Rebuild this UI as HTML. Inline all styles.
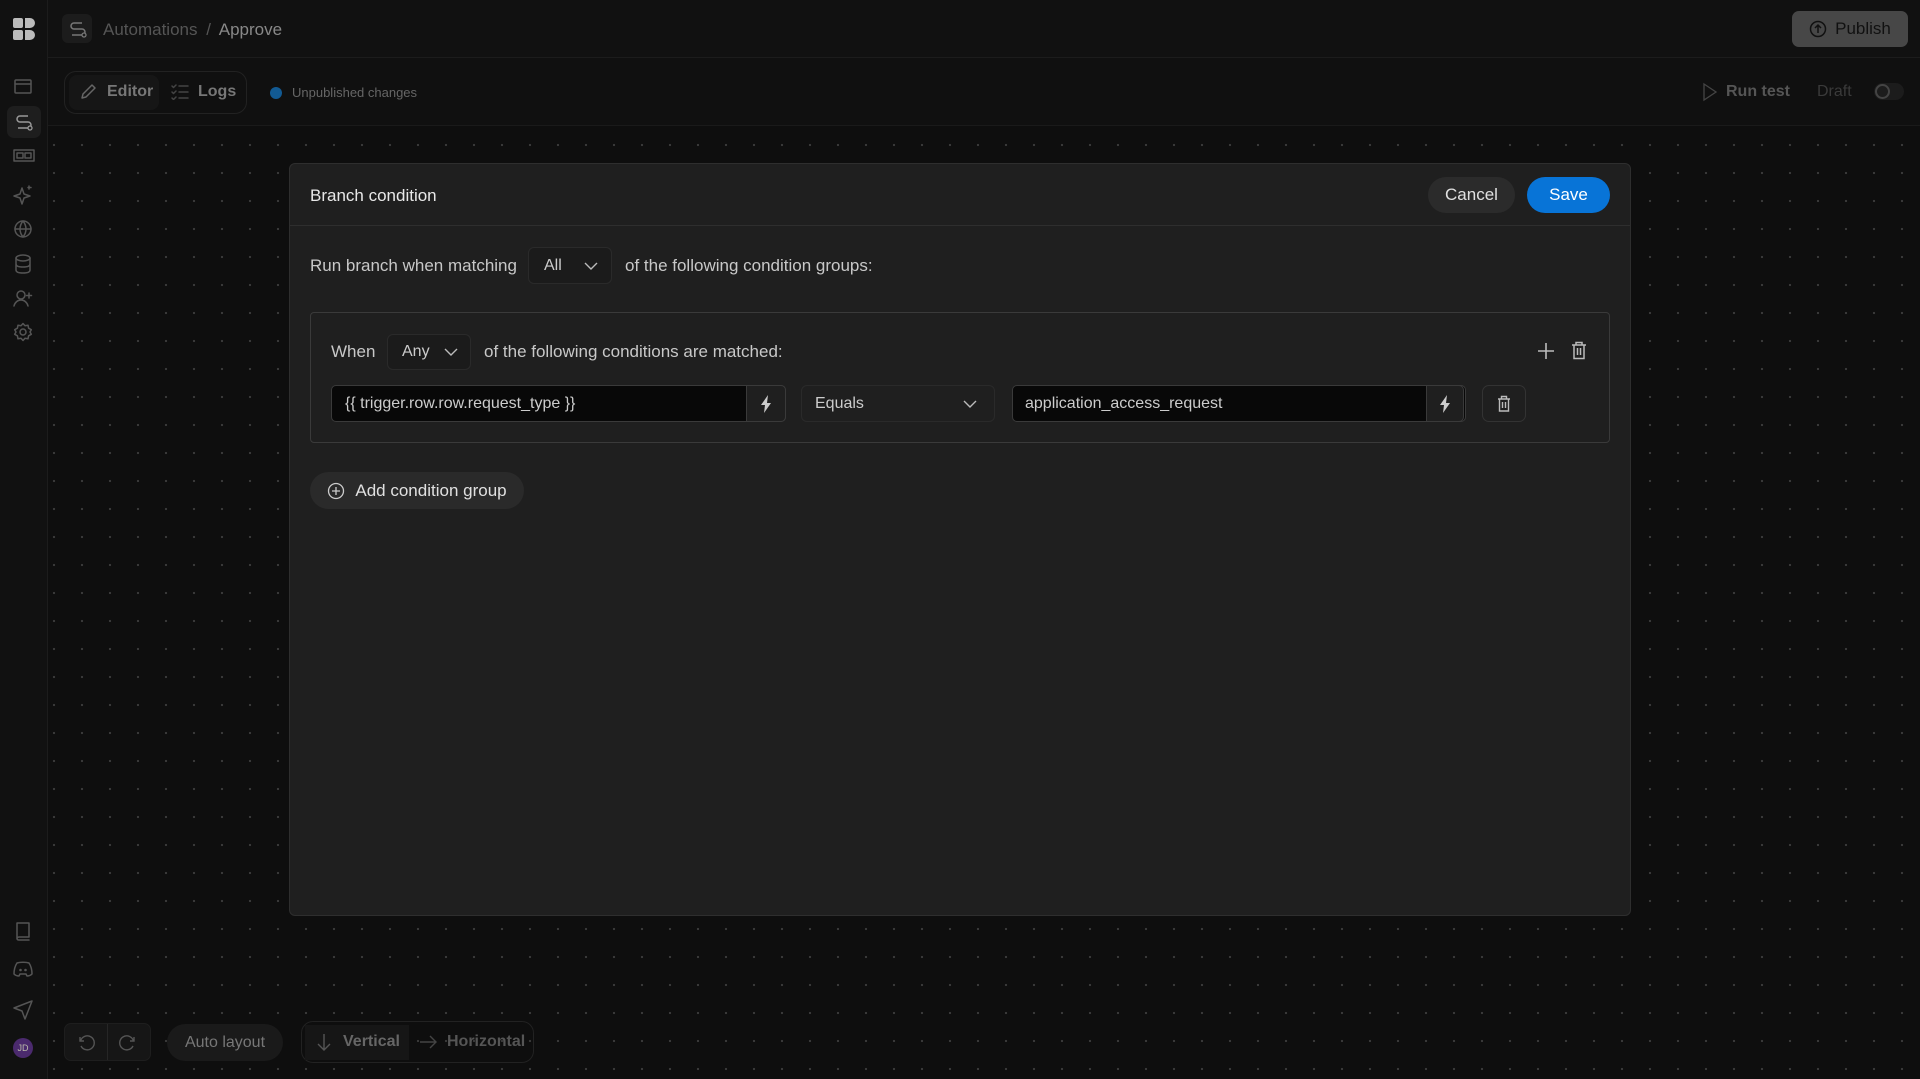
<!DOCTYPE html>
<html><head><meta charset="utf-8"><style>
*{box-sizing:border-box;margin:0;padding:0}
body{width:1920px;height:1079px;overflow:hidden;background:#0f0f0f;font-family:"Liberation Sans",sans-serif;color:#ddd;position:relative}
.abs{position:absolute}
.canvas{left:48px;top:126px;right:0;bottom:0;background-color:#0e0e0e;background-image:radial-gradient(circle,#3a3a3a 1px,transparent 1.3px);background-size:28px 28px;background-position:-8px 5px}
.side{left:0;top:0;width:48px;height:1079px;background:#111;border-right:1px solid #1c1c1c}
.top{left:48px;top:0;right:0;height:58px;background:#111;border-bottom:1px solid #1c1c1c}
.bar2{left:48px;top:58px;right:0;height:68px;background:#101010;border-bottom:1px solid #1a1a1a}
svg{display:block}
.ic{stroke:#555;fill:none;stroke-width:1.5;stroke-linecap:round;stroke-linejoin:round}
.modal{left:289px;top:163px;width:1342px;height:753px;background:#1f1f1f;border:1px solid #2e2e2e;border-radius:6px}
.btn{border-radius:20px;font-size:17px;display:flex;align-items:center;justify-content:center}
.sel{border:1px solid #2a2a2a;background:#1b1b1b;border-radius:6px;font-size:16px;color:#ccc;display:flex;align-items:center}
.inp{background:#080808;border:1px solid #3a3a3a;border-radius:5px;font-size:16px;color:#ccc;display:flex;align-items:center}
.t17{font-size:17px;color:#c8c8c8}
</style></head><body>
<div class="abs canvas"></div>
<div class="abs side"></div>
<div class="abs top"></div>
<div class="abs bar2"></div>

<svg class="abs" style="left:13px;top:18px" width="22" height="22" viewBox="0 0 22 22"><rect x="0" y="0" width="10" height="10" rx="2" fill="#bbb"/><path d="M12 0h5a5 5 0 0 1 0 10h-5z" fill="#bbb"/><rect x="0" y="12" width="10" height="10" rx="2" fill="#bbb"/><path d="M12 12h5a5 5 0 0 1 0 10h-5z" fill="#bbb"/></svg>
<svg class="abs" style="left:13px;top:78px" width="20" height="18"><rect class="ic" x="2" y="2" width="16" height="13" rx="1"/><path class="ic" d="M2 6h16"/></svg>
<div class="abs" style="left:7px;top:106px;width:34px;height:32px;background:#1e1e1e;border-radius:7px"></div>
<svg class="abs" style="left:14px;top:112px" width="20" height="20"><path d="M14 4H6a3 3 0 0 0 0 6h8a3 3 0 0 1 0 6H4" stroke="#999" fill="none" stroke-width="1.5"/><circle cx="16" cy="16" r="2" stroke="#999" fill="#1e1e1e" stroke-width="1.3"/></svg>
<svg class="abs" style="left:13px;top:148px" width="22" height="16"><rect class="ic" x="1" y="2" width="20" height="11"/><rect class="ic" x="4" y="5" width="6" height="5"/><rect class="ic" x="12" y="5" width="6" height="5"/></svg>
<svg class="abs" style="left:13px;top:184px" width="22" height="22"><path class="ic" d="M9 4l2 6 6 2-6 2-2 6-2-6-6-2 6-2z"/><path class="ic" d="M16 2v3M15 3.5h3"/></svg>
<svg class="abs" style="left:13px;top:219px" width="20" height="20"><circle class="ic" cx="10" cy="10" r="8"/><path class="ic" d="M2 10h16M10 2c-4 5-4 11 0 16M10 2c4 5 4 11 0 16"/></svg>
<svg class="abs" style="left:13px;top:253px" width="20" height="22"><ellipse class="ic" cx="10" cy="5" rx="7" ry="3"/><path class="ic" d="M3 5v12c0 2 3 3 7 3s7-1 7-3V5M3 11c0 2 3 3 7 3s7-1 7-3"/></svg>
<svg class="abs" style="left:12px;top:288px" width="22" height="20"><circle class="ic" cx="9" cy="7" r="4"/><path class="ic" d="M2 18c1-4 4-6 7-6s6 2 7 6M17 5v5M14.5 7.5h5"/></svg>
<svg class="abs" style="left:13px;top:322px" width="20" height="20"><circle class="ic" cx="10" cy="10" r="3"/><path class="ic" d="M10 1.5l2 2.2 3-.5.6 3 2.7 1.5-1.3 2.3 1.3 2.3-2.7 1.5-.6 3-3-.5-2 2.2-2-2.2-3 .5-.6-3L1.7 12.3 3 10 1.7 7.7 4.4 6.2l.6-3 3 .5z"/></svg>
<svg class="abs" style="left:14px;top:921px" width="18" height="20"><path class="ic" d="M3 2h12v14H5a2 2 0 0 0-2 2zM3 18a2 2 0 0 0 2 1h10"/></svg>
<svg class="abs" style="left:12px;top:960px" width="22" height="18"><path class="ic" d="M5 3c3-1 9-1 12 0 2 3 3 7 3 11-2 2-4 2-5 2l-1-2H8l-1 2c-1 0-3 0-5-2 0-4 1-8 3-11z"/><circle cx="8.5" cy="10" r="1.3" fill="#555"/><circle cx="13.5" cy="10" r="1.3" fill="#555"/></svg>
<svg class="abs" style="left:12px;top:999px" width="22" height="22"><path class="ic" d="M20 2L2 9l8 3 3 8z"/></svg>
<div class="abs" style="left:13px;top:1038px;width:20px;height:20px;border-radius:50%;background:#4b2a6e;color:#bba;font-size:9px;display:flex;align-items:center;justify-content:center">JD</div>

<div class="abs" style="left:62px;top:14px;width:30px;height:29px;background:#1c1c1c;border-radius:6px"></div>
<svg class="abs" style="left:68px;top:19px" width="20" height="20"><path d="M14 4H6a3 3 0 0 0 0 6h8a3 3 0 0 1 0 6H4" stroke="#777" fill="none" stroke-width="1.5"/><circle cx="16" cy="16" r="2" stroke="#777" fill="#1c1c1c" stroke-width="1.3"/></svg>
<div class="abs" style="left:103px;top:20px;font-size:17px;color:#555">Automations <span style="margin:0 4px">/</span> <span style="color:#888">Approve</span></div>
<div class="abs btn" style="left:1792px;top:11px;width:116px;height:36px;background:#474747;border-radius:7px;color:#111;font-size:17px;gap:8px"><svg width="18" height="18"><circle cx="9" cy="9" r="7.5" stroke="#111" fill="none" stroke-width="1.5"/><path d="M9 13V5M6 8l3-3 3 3" stroke="#111" fill="none" stroke-width="1.5"/></svg>Publish</div>

<div class="abs" style="left:64px;top:71px;width:183px;height:43px;border:1px solid #222;border-radius:12px"></div>
<div class="abs" style="left:69px;top:75px;width:90px;height:35px;background:#161616;border-radius:8px"></div>
<svg class="abs" style="left:79px;top:83px" width="18" height="18"><path class="ic" d="M3 15l1-4L13 2l3 3-9 9z" style="stroke:#666"/></svg>
<div class="abs" style="left:107px;top:83px;font-size:16px;color:#777;font-weight:bold">Editor</div>
<svg class="abs" style="left:171px;top:84px" width="18" height="16"><path class="ic" d="M1 2l1.5 1.5L5 1M1 8l1.5 1.5L5 7M1 14l1.5 1.5L5 13M8 2h9M8 8h9M8 14h9" style="stroke:#444"/></svg>
<div class="abs" style="left:198px;top:83px;font-size:16px;color:#777;font-weight:bold">Logs</div>
<div class="abs" style="left:270px;top:87px;width:12px;height:12px;border-radius:50%;background:#125a93"></div>
<div class="abs" style="left:292px;top:85px;font-size:13px;color:#666">Unpublished changes</div>
<svg class="abs" style="left:1702px;top:82px" width="16" height="20"><path d="M2 2l12 8-12 8z" stroke="#444" fill="none" stroke-width="1.3"/></svg>
<div class="abs" style="left:1726px;top:83px;font-size:16px;font-weight:bold;color:#555">Run test</div>
<div class="abs" style="left:1817px;top:83px;font-size:16px;color:#3a3a3a">Draft</div>
<div class="abs" style="left:1874px;top:83px;width:30px;height:17px;border-radius:9px;background:#1c1c1c"></div>
<div class="abs" style="left:1875px;top:84px;width:15px;height:15px;border-radius:50%;border:2px solid #444"></div>

<div class="abs modal">
  <div class="abs" style="left:0;top:61px;width:100%;border-top:1px solid #2e2e2e"></div>
  <div class="abs" style="left:20px;top:22px;font-size:17px;color:#e8e8e8">Branch condition</div>
  <div class="abs btn" style="left:1138px;top:13px;width:87px;height:36px;background:#2b2b2b;color:#e0e0e0">Cancel</div>
  <div class="abs btn" style="left:1237px;top:13px;width:83px;height:36px;background:#0874d7;color:#fff">Save</div>

  <div class="abs t17" style="left:20px;top:92px">Run branch when matching</div>
  <div class="abs sel" style="left:238px;top:83px;width:84px;height:37px;padding-left:15px">All<svg style="margin-left:22px" width="14" height="8"><path d="M1 1l6 6 6-6" stroke="#bbb" fill="none" stroke-width="1.4"/></svg></div>
  <div class="abs t17" style="left:335px;top:92px">of the following condition groups:</div>

  <div class="abs" style="left:20px;top:148px;width:1300px;height:131px;border:1px solid #3a3a3a;border-radius:4px">
    <div class="abs t17" style="left:20px;top:29px">When</div>
    <div class="abs sel" style="left:76px;top:21px;width:84px;height:36px;padding-left:14px">Any<svg style="margin-left:14px" width="14" height="8"><path d="M1 1l6 6 6-6" stroke="#bbb" fill="none" stroke-width="1.4"/></svg></div>
    <div class="abs t17" style="left:173px;top:29px">of the following conditions are matched:</div>
    <svg class="abs" style="left:1226px;top:29px" width="18" height="18"><path d="M9 1v16M1 9h16" stroke="#bbb" stroke-width="1.6"/></svg>
    <svg class="abs" style="left:1260px;top:28px" width="16" height="19"><path d="M1 4h14M5 4V1.5h6V4M3 4v13.5h10V4M6.5 7v7M9.5 7v7" stroke="#bbb" fill="none" stroke-width="1.5"/></svg>

    <div class="abs inp" style="left:20px;top:72px;width:455px;height:37px;padding-left:13px">{{ trigger.row.row.request_type }}</div>
    <div class="abs" style="left:435px;top:72px;width:40px;height:37px;border:1px solid #3a3a3a;border-radius:0 5px 5px 0;background:#1f1f1f;display:flex;align-items:center;justify-content:center"><svg width="12" height="18"><path d="M8 0L1 10h4l-1 8 7-10H7z" fill="#ccc"/></svg></div>
    <div class="abs sel" style="left:490px;top:72px;width:194px;height:37px;padding-left:13px;background:#1f1f1f">Equals<svg style="margin-left:99px" width="14" height="8"><path d="M1 1l6 6 6-6" stroke="#bbb" fill="none" stroke-width="1.4"/></svg></div>
    <div class="abs inp" style="left:701px;top:72px;width:454px;height:37px;padding-left:12px">application_access_request</div>
    <div class="abs" style="left:1115px;top:72px;width:38px;height:37px;border:1px solid #3a3a3a;border-radius:0 5px 5px 0;background:#1f1f1f;display:flex;align-items:center;justify-content:center"><svg width="12" height="18"><path d="M8 0L1 10h4l-1 8 7-10H7z" fill="#ccc"/></svg></div>
    <div class="abs" style="left:1171px;top:72px;width:44px;height:37px;border:1px solid #333;border-radius:7px;display:flex;align-items:center;justify-content:center"><svg width="14" height="17"><path d="M1 4h12M4.5 4V1.5h5V4M2.5 4v12h9V4M5.5 7v6M8.5 7v6" stroke="#bbb" fill="none" stroke-width="1.4"/></svg></div>
  </div>

  <div class="abs btn" style="left:20px;top:308px;width:214px;height:37px;background:#2a2a2a;gap:10px;color:#e0e0e0"><svg width="18" height="18"><circle cx="9" cy="9" r="7.5" stroke="#ccc" fill="none" stroke-width="1.3"/><path d="M9 5v8M5 9h8" stroke="#ccc" stroke-width="1.3"/></svg>Add condition group</div>
</div>

<div class="abs" style="left:64px;top:1023px;width:87px;height:38px;background:#161616;border:1px solid #1e1e1e;border-radius:7px"></div>
<div class="abs" style="left:107px;top:1024px;height:36px;border-left:1px solid #262626"></div>
<svg class="abs" style="left:76px;top:1032px" width="20" height="20"><path d="M4 5v4h4M4.5 9A7 7 0 1 1 5 14" stroke="#555" fill="none" stroke-width="1.4"/></svg>
<svg class="abs" style="left:118px;top:1032px" width="20" height="20"><path d="M16 5v4h-4M15.5 9A7 7 0 1 0 15 14" stroke="#555" fill="none" stroke-width="1.4"/></svg>
<div class="abs btn" style="left:167px;top:1024px;width:116px;height:37px;background:#1a1a1a;color:#777;font-size:16px">Auto layout</div>
<div class="abs" style="left:301px;top:1021px;width:233px;height:42px;border:1px solid #222;border-radius:12px"></div>
<div class="abs" style="left:305px;top:1025px;width:104px;height:35px;background:#161616"></div>
<svg class="abs" style="left:316px;top:1032px" width="16" height="20"><path d="M8 2v16M2 12l6 6 6-6" stroke="#555" fill="none" stroke-width="1.4"/></svg>
<div class="abs" style="left:343px;top:1033px;font-size:16px;font-weight:bold;color:#666">Vertical</div>
<svg class="abs" style="left:418px;top:1034px" width="20" height="16"><path d="M2 8h16M12 2l6 6-6 6" stroke="#444" fill="none" stroke-width="1.4"/></svg>
<div class="abs" style="left:447px;top:1033px;font-size:16px;font-weight:bold;color:#555">Horizontal</div>
</body></html>
